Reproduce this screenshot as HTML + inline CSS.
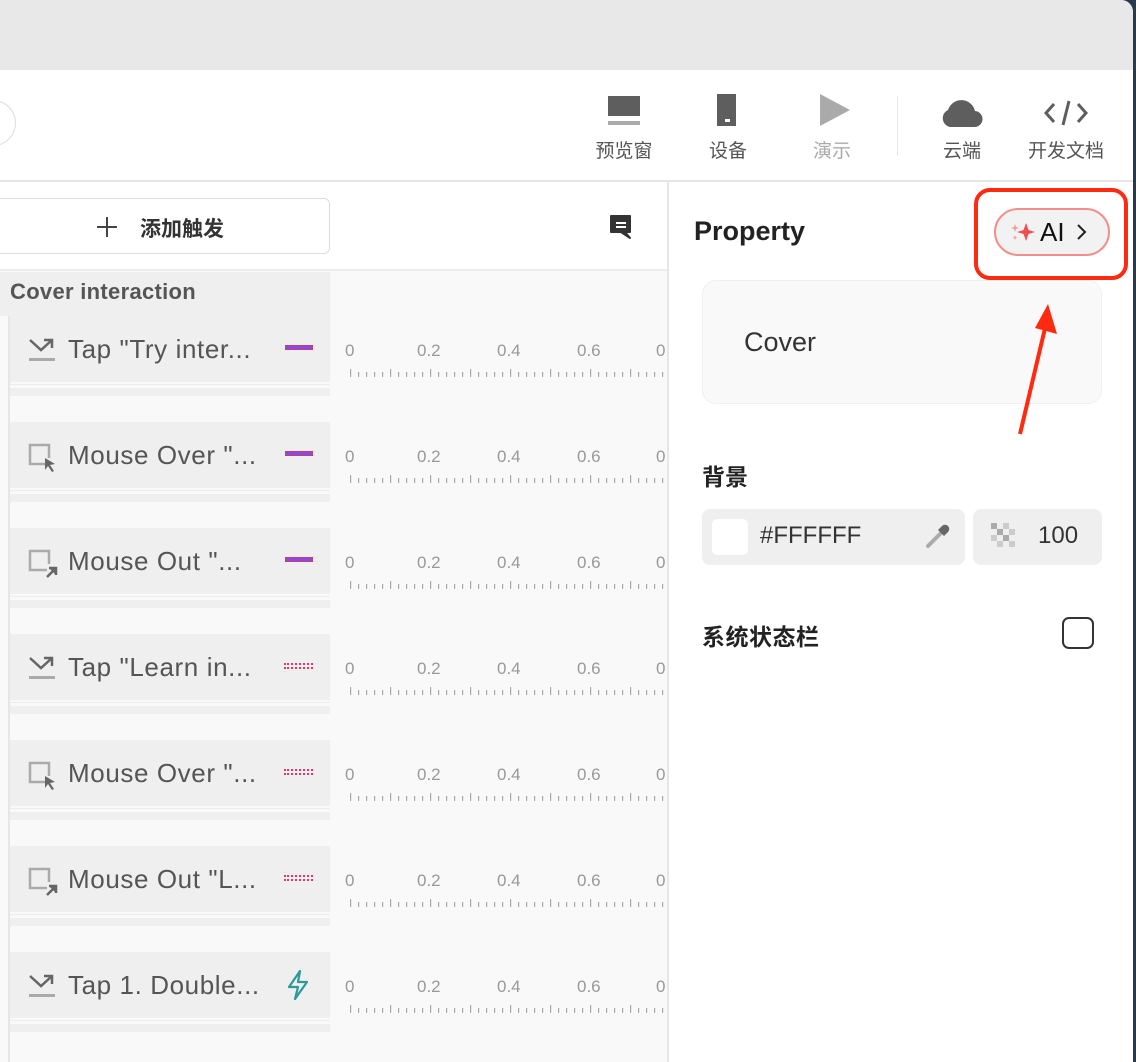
<!DOCTYPE html>
<html><head><meta charset="utf-8"><style>
*{margin:0;padding:0;box-sizing:border-box}
body{width:1136px;height:1062px;overflow:hidden;background:#2a3a4a;font-family:"Liberation Sans","Noto Sans CJK SC",sans-serif;position:relative}
.win{position:absolute;left:0;top:0;width:1133px;height:1062px;background:#fff;border-top-right-radius:12px;overflow:hidden}
.abs{position:absolute}
.tb{color:#555;font-size:19px;text-align:center}
.row{position:absolute;left:10px;width:320px;height:66px;background:#efefef}
.rl{position:absolute;left:10px;width:320px;height:1px;background:#ececec}
.rb{position:absolute;left:10px;width:320px;height:8px;background:#efefef}
.rt{position:absolute;left:68px;font-size:26px;letter-spacing:0.6px;color:#555;white-space:nowrap}
.lab{position:absolute;font-size:17px;color:#999}
</style></head><body>
<div class="win">
<div class="abs" style="left:0;top:0;width:1133px;height:70px;background:#e8e8e8"></div>
<div class="abs" style="left:-30px;top:100px;width:46px;height:46px;border:1px solid #ddd;border-radius:50%"></div>
<div class="abs" style="left:608px;top:96px;width:32px;height:20px;background:#5e5e5e"></div>
<div class="abs" style="left:608px;top:121px;width:32px;height:4px;background:#aaa"></div>
<div class="tb abs" style="left:584px;top:136px;width:80px">预览窗</div>
<div class="abs" style="left:717px;top:94px;width:19px;height:32px;background:#5e5e5e"></div>
<div class="abs" style="left:725px;top:119px;width:5px;height:3px;background:#fff"></div>
<div class="tb abs" style="left:688px;top:136px;width:80px">设备</div>
<svg class="abs" style="left:818px;top:93px" width="34" height="34"><path d="M2 1 L32 17 L2 33Z" fill="#aaa"/></svg>
<div class="tb abs" style="left:792px;top:136px;width:80px;color:#aaa">演示</div>
<div class="abs" style="left:897px;top:96px;width:1px;height:60px;background:#e6e6e6"></div>
<svg class="abs" style="left:940px;top:97px" width="44" height="32"><path d="M10 30 A9 9 0 0 1 8 13 A14 14 0 0 1 35 14 A8 8 0 0 1 34 30Z" fill="#5e5e5e"/></svg>
<div class="tb abs" style="left:922px;top:136px;width:80px">云端</div>
<svg class="abs" style="left:1044px;top:98px" width="44" height="30"><path d="M10 6 L2 15 L10 24 M34 6 L42 15 L34 24 M25 3 L19 27" stroke="#5e5e5e" stroke-width="3" fill="none"/></svg>
<div class="tb abs" style="left:1022px;top:136px;width:88px">开发文档</div>
<div class="abs" style="left:0;top:180px;width:1133px;height:2px;background:#e6e6e6"></div>
<div class="abs" style="left:-10px;top:198px;width:340px;height:56px;border:1px solid #ddd;border-radius:6px"></div>
<svg class="abs" style="left:96px;top:216px" width="22" height="22"><path d="M11 1 V21 M1 11 H21" stroke="#444" stroke-width="2"/></svg>
<div class="abs" style="left:140px;top:213px;font-size:21px;color:#333;font-weight:bold">添加触发</div>
<svg class="abs" style="left:608px;top:213px" width="26" height="28"><path d="M3 3 H22 V19 H17 L22 25 L13 19 H3Z" fill="#333" stroke="#333" stroke-width="2" stroke-linejoin="round"/><rect x="8" y="9" width="10" height="2" fill="#fff"/><rect x="8" y="13" width="10" height="2" fill="#fff"/></svg>
<div class="abs" style="left:0;top:269px;width:668px;height:2px;background:#ececec"></div>
<div class="abs" style="left:0;top:271px;width:668px;height:791px;background:#f9f9f9"></div>
<div class="abs" style="left:0;top:272px;width:330px;height:44px;background:#efefef"></div>
<div class="abs" style="left:10px;top:279px;font-size:22px;letter-spacing:0.3px;font-weight:bold;color:#555">Cover interaction</div>
<div class="abs" style="left:8px;top:316px;width:2px;height:746px;background:#e6e6e6"></div>
<div class="abs" style="left:667px;top:182px;width:2px;height:880px;background:#e6e6e6"></div>
<div id="rows"></div>
<div class="abs" style="left:694px;top:216px;font-size:27px;font-weight:bold;color:#222">Property</div>
<div class="abs" style="left:974px;top:188px;width:154px;height:92px;border:4px solid #ff2a10;border-radius:16px"></div>
<div class="abs" style="left:994px;top:208px;width:116px;height:48px;border:2px solid #f0908a;border-radius:24px;background:#f2f2f2"></div>
<svg class="abs" style="left:1008px;top:220px" width="30" height="24"><path d="M18 3 L20.5 10 L27 12 L20.5 14 L18 21 L15.5 14 L9 12 L15.5 10Z" fill="#ef4f4f"/><path d="M7 4 L8 7 L11 8 L8 9 L7 12 L6 9 L3 8 L6 7Z" fill="#f59a9a"/><path d="M7 15 L7.7 17 L9.5 17.7 L7.7 18.4 L7 20 L6.3 18.4 L4.5 17.7 L6.3 17Z" fill="#f59a9a"/></svg>
<div class="abs" style="left:1040px;top:217px;font-size:26px;color:#111">AI</div>
<svg class="abs" style="left:1074px;top:222px" width="14" height="20"><path d="M4 3 L11 10 L4 17" stroke="#222" stroke-width="2" fill="none"/></svg>
<div class="abs" style="left:702px;top:280px;width:400px;height:124px;background:#f9f9f9;border:1px solid #f0f0f0;border-radius:14px"></div>
<div class="abs" style="left:744px;top:327px;font-size:27px;color:#333">Cover</div>
<svg class="abs" style="left:1010px;top:296px" width="50" height="145"><path d="M10 138 L36 28" stroke="#ff2a10" stroke-width="4"/><path d="M38 8 L47 38 L25 32Z" fill="#ff2a10"/></svg>
<div class="abs" style="left:702px;top:458px;font-size:23px;font-weight:bold;color:#222">背景</div>
<div class="abs" style="left:702px;top:509px;width:263px;height:56px;background:#efefef;border-radius:8px"></div>
<div class="abs" style="left:711px;top:518px;width:38px;height:38px;background:#fff;border-radius:6px;border:1px solid #eee"></div>
<div class="abs" style="left:760px;top:522px;font-size:24px;color:#333">#FFFFFF</div>
<svg class="abs" style="left:924px;top:522px" width="28" height="28"><path d="M4 24 L16 12" stroke="#aaa" stroke-width="4" stroke-linecap="round"/><path d="M14 8 L20 14 L24 10 A3 3 0 0 0 18 4Z" fill="#666"/></svg>
<div class="abs" style="left:973px;top:509px;width:129px;height:56px;background:#efefef;border-radius:8px"></div>
<svg class="abs" style="left:991px;top:523px" width="28" height="28"><g fill="#aaa"><rect x="0" y="0" width="6" height="6"/><rect x="12" y="0" width="6" height="6" fill="#ccc"/><rect x="6" y="6" width="6" height="6"/><rect x="18" y="6" width="6" height="6" fill="#ccc"/><rect x="0" y="12" width="6" height="6" fill="#ccc"/><rect x="12" y="12" width="6" height="6"/><rect x="6" y="18" width="6" height="6" fill="#ccc"/><rect x="18" y="18" width="6" height="6" fill="#ccc"/></g></svg>
<div class="abs" style="left:1038px;top:522px;font-size:24px;color:#333">100</div>
<div class="abs" style="left:702px;top:618px;font-size:23px;letter-spacing:0.5px;font-weight:bold;color:#222">系统状态栏</div>
<div class="abs" style="left:1062px;top:617px;width:32px;height:32px;border:2px solid #333;border-radius:7px"></div>
</div>
<script>
var d=[["tap",'Tap "Try inter...',"p"],["mo",'Mouse Over "...',"p"],["mout",'Mouse Out "...',"p"],["tap",'Tap "Learn in...',"r"],["mo",'Mouse Over "...',"r"],["mout",'Mouse Out "L...',"r"],["tap","Tap 1. Double...","z"]];
var h="";
d.forEach(function(r,i){var t=316+i*106;
h+='<div class="row" style="top:'+t+'px"></div><div class="rl" style="top:'+(t+68)+'px"></div><div class="rb" style="top:'+(t+72)+'px"></div>';
var ic;
if(r[0]=="tap")ic='<svg class="abs" style="left:27px;top:'+(t+20)+'px" width="30" height="28"><path d="M3 4 L14 14 L25 4 M17 4 H25 V12" stroke="#666" stroke-width="2.5" fill="none"/><rect x="2" y="22" width="26" height="3" fill="#aaa"/></svg>';
else ic='<svg class="abs" style="left:27px;top:'+(t+20)+'px" width="32" height="32"><path d="M20 22 H3 V3 H22 V16" stroke="#aaa" stroke-width="2.5" fill="none"/>'+(r[0]=="mo"?'<path d="M18 16 L28 22 L23 23 L27 29 L25 30 L21 24 L18 28Z" fill="#666"/>':'<path d="M20 29 L28 21 M22 20 H29 V27" stroke="#666" stroke-width="2.5" fill="#666"/>')+'</svg>';
h+=ic+'<div class="rt" style="top:'+(t+18)+'px">'+r[1]+'</div>';
if(r[2]=="p")h+='<div class="abs" style="left:285px;top:'+(t+29)+'px;width:28px;height:5px;background:#8a4ae0;border-top:1px dashed #e33;border-bottom:1px dashed #e33"></div>';
else if(r[2]=="r")h+='<div class="abs" style="left:284px;top:'+(t+29)+'px;width:29px;height:6px;border:2px dotted #e3356a"></div>';
else h+='<svg class="abs" style="left:284px;top:'+(t+17)+'px" width="28" height="32"><path d="M16 2 L5 18 H14 L11 30 L23 13 H14Z" stroke="#2a9a9a" stroke-width="2.2" fill="none" stroke-linejoin="round"/></svg>';
[["0",345],["0.2",417],["0.4",497],["0.6",577],["0",656]].forEach(function(l){h+='<div class="lab" style="left:'+l[1]+'px;top:'+(t+25)+'px">'+l[0]+'</div>';});
var s='<svg class="abs" style="left:350px;top:'+(t+53)+'px" width="316" height="10">';
for(var x=0;x<316;x+=8){var mj=(x%40==0);s+='<rect x="'+x+'" y="'+(mj?0:3)+'" width="1.2" height="'+(mj?8:5)+'" fill="#aaa"/>';}
h+=s+'</svg>';});
document.getElementById("rows").innerHTML=h;
</script>
</body></html>
